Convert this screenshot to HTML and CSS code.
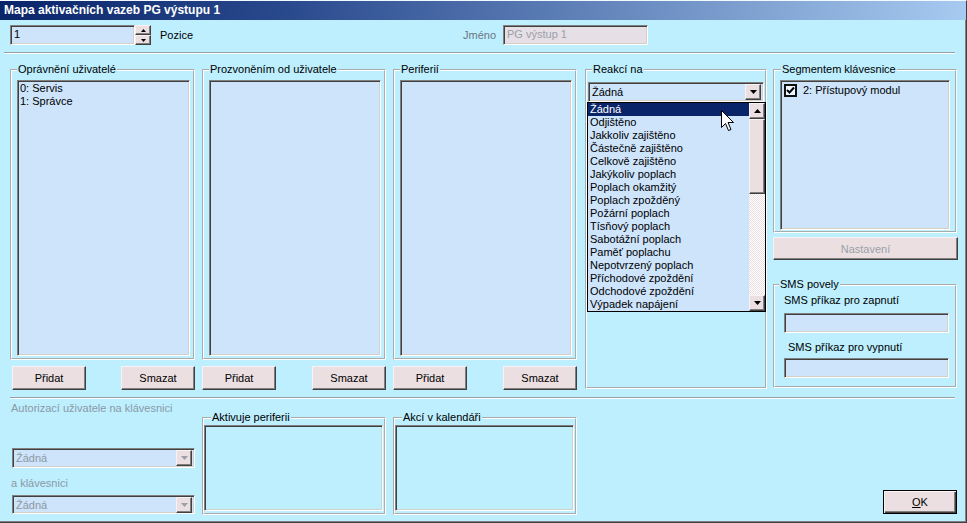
FILE: index.html
```html
<!DOCTYPE html>
<html>
<head>
<meta charset="utf-8">
<link rel="stylesheet" href="styles.css">
</head>
<body>
<div class="window">
  <div class="titlebar">Mapa aktivačních vazeb PG výstupu 1</div>
  <div class="client">
    <div class="toprow">
      <div class="pos-group">
        <div class="field spin-text">1</div>
        <div class="spinbtns">
          <div class="rbtn spinbtn"><svg width="5" height="3" viewBox="0 0 5 3"><path d="M0 3h5L2.5 0z"/></svg></div>
          <div class="rbtn spinbtn"><svg width="5" height="3" viewBox="0 0 5 3"><path d="M0 0h5L2.5 3z"/></svg></div>
        </div>
        <span class="pozice">Pozice</span>
      </div>
      <span class="jmeno">Jméno</span>
      <div class="field name-field">PG výstup 1</div>
    </div>
    <div class="sep"></div>

    <div class="main">
      <div class="col col1">
        <fieldset class="group ugroup">
          <legend>Oprávnění uživatelé</legend>
          <div class="list">
            <div class="item">0: Servis</div>
            <div class="item">1: Správce</div>
          </div>
        </fieldset>
        <div class="btnrow btnrow1">
          <button class="btn">Přidat</button>
          <button class="btn">Smazat</button>
        </div>
      </div>
      <div class="col">
        <fieldset class="group ugroup">
          <legend>Prozvoněním od uživatele</legend>
          <div class="list"></div>
        </fieldset>
        <div class="btnrow">
          <button class="btn">Přidat</button>
          <button class="btn">Smazat</button>
        </div>
      </div>
      <div class="col">
        <fieldset class="group ugroup">
          <legend>Periferií</legend>
          <div class="list"></div>
        </fieldset>
        <div class="btnrow">
          <button class="btn">Přidat</button>
          <button class="btn">Smazat</button>
        </div>
      </div>

      <fieldset class="group reakci">
        <legend>Reakcí na</legend>
        <div class="combo">
          <div class="combo-text">Žádná</div>
          <div class="rbtn combo-arrow"><svg width="7" height="4" viewBox="0 0 7 4"><path d="M0 0h7L3.5 4z"/></svg></div>
          <div class="dropdown">
            <div class="ddlist">
              <div class="dditem sel">Žádná</div>
              <div class="dditem">Odjištěno</div>
              <div class="dditem">Jakkoliv zajištěno</div>
              <div class="dditem">Částečně zajištěno</div>
              <div class="dditem">Celkově zajištěno</div>
              <div class="dditem">Jakýkoliv poplach</div>
              <div class="dditem">Poplach okamžitý</div>
              <div class="dditem">Poplach zpožděný</div>
              <div class="dditem">Požární poplach</div>
              <div class="dditem">Tísňový poplach</div>
              <div class="dditem">Sabotážní poplach</div>
              <div class="dditem">Paměť poplachu</div>
              <div class="dditem">Nepotvrzený poplach</div>
              <div class="dditem">Příchodové zpoždění</div>
              <div class="dditem">Odchodové zpoždění</div>
              <div class="dditem">Výpadek napájení</div>
            </div>
            <div class="scrollbar">
              <div class="rbtn sbbtn"><svg width="7" height="4" viewBox="0 0 7 4"><path d="M0 4h7L3.5 0z"/></svg></div>
              <div class="rbtn sbthumb"></div>
              <div class="sbtrack"></div>
              <div class="rbtn sbbtn"><svg width="7" height="4" viewBox="0 0 7 4"><path d="M0 0h7L3.5 4z"/></svg></div>
            </div>
            <svg class="cursor" width="13" height="21" viewBox="0 0 13 21"><path d="M0.5 0.5V17.5L4.5 13.5L7.5 20.5L10 19.5L7 12.5H12.5Z" fill="#fff" stroke="#000" stroke-width="1" stroke-linejoin="miter"/></svg>
          </div>
        </div>
      </fieldset>

      <div class="rightcol">
        <fieldset class="group seg">
          <legend>Segmentem klávesnice</legend>
          <div class="list seglist">
            <div class="chkitem">
              <span class="chk"><svg width="9" height="9" viewBox="0 0 9 9"><path d="M1 4l2.5 2.5L8 1.5" fill="none" stroke="#000" stroke-width="2"/></svg></span>
              <span>2: Přístupový modul</span>
            </div>
          </div>
        </fieldset>
        <button class="btn nastaveni" disabled>Nastavení</button>
        <fieldset class="group sms">
          <legend>SMS povely</legend>
          <div class="smslabel">SMS příkaz pro zapnutí</div>
          <div class="field smsfield"></div>
          <div class="smslabel smslabel2">SMS příkaz pro vypnutí</div>
          <div class="field smsfield smsfield2"></div>
        </fieldset>
      </div>
    </div>

    <div class="sep sep2"></div>

    <div class="bottom">
      <div class="auth">
        <div class="gray authlabel">Autorizací uživatele na klávesnici</div>
        <div class="combo dcombo dcombo1">
          <div class="combo-text gray">Žádná</div>
          <div class="rbtn combo-arrow"><svg width="7" height="4" viewBox="0 0 7 4"><path d="M0 0h7L3.5 4z" fill="#9aa0a8"/></svg></div>
        </div>
        <div class="gray klabel">a klávesnici</div>
        <div class="combo dcombo dcombo2">
          <div class="combo-text gray">Žádná</div>
          <div class="rbtn combo-arrow"><svg width="7" height="4" viewBox="0 0 7 4"><path d="M0 0h7L3.5 4z" fill="#9aa0a8"/></svg></div>
        </div>
      </div>
      <fieldset class="group bgroup">
        <legend>Aktivuje periferii</legend>
        <div class="list blist"></div>
      </fieldset>
      <fieldset class="group bgroup bgroup2">
        <legend>Akcí v kalendáři</legend>
        <div class="list blist"></div>
      </fieldset>
      <button class="btn okbtn"><u>O</u>K</button>
    </div>
  </div>
</div>
</body>
</html>
```
FILE: styles.css
```css
* { box-sizing: border-box; }

body {
  margin: 0;
  width: 967px;
  height: 523px;
  overflow: hidden;
  background: #bdefff;
  font: 11px "Liberation Sans", Arial, sans-serif;
  color: #000;
}

.window {
  width: 967px;
  height: 523px;
  display: flex;
  flex-direction: column;
  border-top: 1px solid #f4f8ff;
  border-right: 1px solid #404040;
  border-bottom: 1px solid #404040;
  box-shadow: inset -1px -1px #808080;
}

.titlebar {
  height: 19px;
  line-height: 19px;
  padding-left: 4px;
  color: #fff;
  font-weight: bold;
  font-size: 12px;
  background: linear-gradient(to right, #0a246a 0%, #2a4a8e 30%, #a6caf0 100%);
}

.client {
  flex: 1;
  display: flex;
  flex-direction: column;
  padding: 5px 9px 0 10px;
}

/* generic 3d */
.field {
  background: #cde4fb;
  border: 1px solid;
  border-color: #808080 #fff #fff #808080;
  box-shadow: inset 1px 1px #404040, inset -1px -1px #d4d0c8;
}

.rbtn {
  background: #ecdfe2;
  border: 1px solid;
  border-color: #f8f2f4 #404040 #404040 #f8f2f4;
  box-shadow: inset -1px -1px #808080;
  display: flex;
  align-items: center;
  justify-content: center;
}

.gray { color: #8c98a4; }

/* top row */
.toprow {
  height: 20px;
  display: flex;
  align-items: center;
}

.pos-group {
  width: 453px;
  height: 20px;
  display: flex;
  align-items: center;
}

.spin-text {
  width: 125px;
  height: 20px;
  line-height: 16px;
  padding-left: 3px;
}

.spinbtns {
  width: 16px;
  height: 20px;
  display: flex;
  flex-direction: column;
}

.spinbtn { height: 10px; }

.pozice { margin-left: 9px; }

.jmeno {
  color: #6c7680;
  margin-right: 7px;
}

.name-field {
  width: 145px;
  height: 20px;
  line-height: 16px;
  padding-left: 3px;
  background: #e6dfe6;
  color: #9aa0a8;
}

.sep {
  height: 2px;
  border-top: 1px solid #94a0a8;
  border-bottom: 1px solid #fff;
  margin: 7px 2px 0 -6px;
}

/* main */
.main {
  display: flex;
  gap: 7px;
  height: 327px;
  margin-top: 9px;
}

.col {
  width: 184px;
  display: flex;
  flex-direction: column;
}

.col1 { width: 185px; }

.group {
  margin: 0;
  border: 2px groove #ffffff;
  min-width: 0;
}

.group legend {
  padding: 0 1px;
  line-height: 13px;
  font-size: 11px;
}

.ugroup {
  height: 297px;
  padding: 4px 3px 2px 5px;
}

.list {
  background: #cde4fb;
  border: 1px solid;
  border-color: #808080 #fff #fff #808080;
  box-shadow: inset 1px 1px #404040, inset -1px -1px #d4d0c8;
  padding: 1px 2px;
}

.ugroup .list { height: 276px; }

.item { line-height: 13px; }

.btnrow {
  display: flex;
  justify-content: space-between;
  margin-top: 6px;
}

.btnrow1 { padding-left: 2px; }

.btn {
  width: 74px;
  height: 24px;
  padding: 0;
  font: inherit;
  color: #000;
  background: #ecdfe2;
  border: 1px solid;
  border-color: #f8f2f4 #404040 #404040 #f8f2f4;
  box-shadow: inset -1px -1px #808080;
}

/* reakci */
.reakci {
  width: 182px;
  height: 326px;
  margin-left: 1px;
  padding: 6px 1px 0 1px;
}

.reakci legend { margin-left: 4px; }

.combo {
  position: relative;
  height: 20px;
  display: flex;
  background: #cde4fb;
  border: 1px solid;
  border-color: #808080 #fff #fff #808080;
  box-shadow: inset 1px 1px #404040, inset -1px -1px #d4d0c8;
  padding: 2px;
}

.combo-text {
  flex: 1;
  line-height: 14px;
  padding-left: 1px;
}

.combo-arrow {
  width: 16px;
  height: 16px;
  margin-top: -1px;
}

.dropdown {
  position: absolute;
  top: 19px;
  left: -2px;
  width: 179px;
  height: 210px;
  border: 1px solid #000;
  background: #cde4fb;
  display: flex;
  z-index: 5;
}

.ddlist { flex: 1; }

.dditem {
  line-height: 13px;
  height: 13px;
  padding-left: 2px;
  white-space: nowrap;
}

.dditem.sel {
  background: #0a246a;
  color: #fff;
}

.scrollbar {
  width: 16px;
  display: flex;
  flex-direction: column;
}

.sbbtn { height: 16px; }

.sbthumb { height: 75px; }

.sbtrack {
  flex: 1;
  background: repeating-conic-gradient(#ecdfe2 0 25%, #ffffff 0 50%) 0 0 / 2px 2px;
}

.cursor {
  position: absolute;
  left: 133px;
  top: 7px;
}

/* right column */
.rightcol {
  width: 184px;
  margin-left: -1px;
  display: flex;
  flex-direction: column;
}

.seg {
  height: 170px;
  padding: 4px 5px 1px 5px;
}

.seg legend { margin-left: 1px; }

.seglist { height: 150px; }

.chkitem {
  display: flex;
  align-items: center;
  gap: 6px;
  margin: 2px 0 0 1px;
  line-height: 13px;
}

.chk {
  width: 13px;
  height: 13px;
  border: 2px solid #101010;
  background: #eef6ff;
  display: flex;
  align-items: center;
  justify-content: center;
}

.nastaveni {
  width: 185px;
  height: 23px;
  margin-top: 4px;
  color: #9aa0a8;
}

.sms {
  height: 110px;
  margin-top: 18px;
  padding: 3px 4px 0 9px;
}

.sms legend { margin-left: -5px; }

.smslabel { line-height: 13px; }

.smslabel2 { margin-top: 8px; margin-left: 4px; }

.smsfield {
  width: 165px;
  height: 20px;
  margin-top: 6px;
}

.smsfield2 { margin-top: 4px; }

/* bottom */
.sep2 { margin: 7px 2px 0 0; }

.bottom {
  flex: 1;
  display: flex;
}

.auth {
  width: 192px;
  display: flex;
  flex-direction: column;
  padding-left: 1px;
}

.authlabel {
  margin-top: 3px;
  line-height: 13px;
}

.dcombo {
  width: 183px;
  margin-left: 1px;
}

.dcombo1 { margin-top: 33px; }

.klabel {
  margin-top: 9px;
  line-height: 13px;
}

.dcombo2 { margin-top: 5px; height: 19px; }

.bgroup {
  width: 184px;
  height: 104px;
  margin-top: 12px;
  padding: 1px 1px 2px 0;
}

.bgroup legend { margin-left: 7px; }

.bgroup2 { margin-left: 7px; }

.blist {
  height: 86px;
  background: #bdefff;
}

.okbtn {
  margin-left: auto;
  align-self: flex-end;
  margin-bottom: 8px;
  border: 1px solid #000;
  box-shadow: inset 1px 1px #f8f2f4, inset -1px -1px #404040, inset -2px -2px #808080;
}
```
